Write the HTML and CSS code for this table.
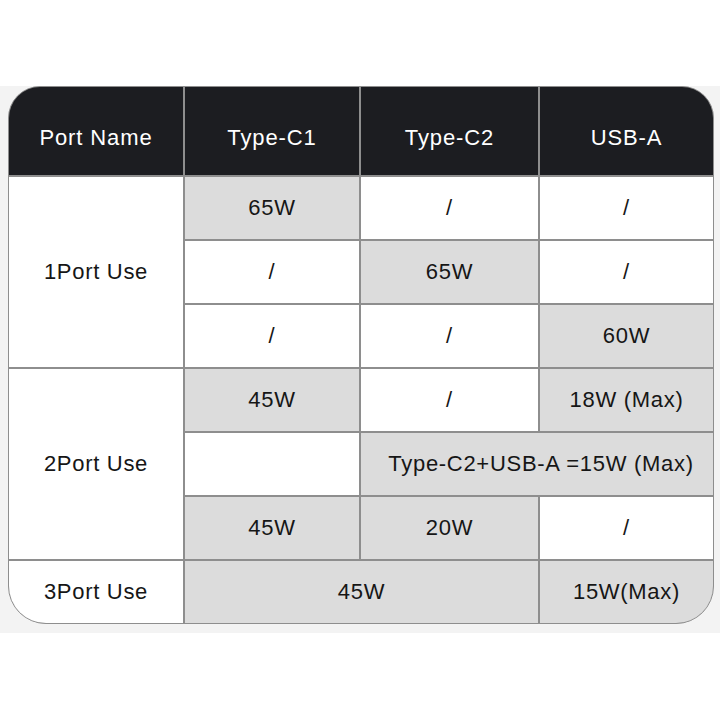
FILE: index.html
```html
<!DOCTYPE html>
<html>
<head>
<meta charset="utf-8">
<link rel="stylesheet" href="styles.css">
</head>
<body>
<div class="band">
  <div class="table">
    <div class="cell head">Port Name</div>
    <div class="cell head">Type-C1</div>
    <div class="cell head">Type-C2</div>
    <div class="cell head">USB-A</div>

    <div class="cell label span3">1Port Use</div>
    <div class="cell gray">65W</div>
    <div class="cell">/</div>
    <div class="cell">/</div>
    <div class="cell">/</div>
    <div class="cell gray">65W</div>
    <div class="cell">/</div>
    <div class="cell">/</div>
    <div class="cell">/</div>
    <div class="cell gray">60W</div>

    <div class="cell label span3">2Port Use</div>
    <div class="cell gray">45W</div>
    <div class="cell">/</div>
    <div class="cell gray">18W (Max)</div>
    <div class="cell"></div>
    <div class="cell gray span2 shared">Type-C2+USB-A =15W (Max)</div>
    <div class="cell gray">45W</div>
    <div class="cell gray">20W</div>
    <div class="cell">/</div>

    <div class="cell label">3Port Use</div>
    <div class="cell gray span2">45W</div>
    <div class="cell gray">15W(Max)</div>
  </div>
</div>
</body>
</html>
```

FILE: styles.css
```css
html, body {
  margin: 0;
  padding: 0;
  background: #ffffff;
}

body {
  font-family: "Liberation Sans", Arial, sans-serif;
}

.band {
  margin-top: 86px;
  background: #f3f3f3;
  padding: 0 6px 9px 8px;
}

.table {
  display: grid;
  grid-template-columns: 174px 174px 177px 173px;
  grid-template-rows: 88px repeat(7, 62px);
  gap: 2px;
  background: #8e8e8e;
  border: 1px solid #8e8e8e;
  border-radius: 32px 32px 38px 38px;
  overflow: hidden;
}

.cell {
  display: flex;
  align-items: center;
  justify-content: center;
  background: #ffffff;
  color: #161616;
  font-size: 22px;
  letter-spacing: 0.7px;
}

.head {
  background: #1c1d21;
  color: #ffffff;
  letter-spacing: 0.9px;
  padding-top: 14px;
}

.gray {
  background: #dcdcdc;
}

.span3 {
  grid-row: span 3;
}

.span2 {
  grid-column: span 2;
}

.shared {
  padding-left: 8px;
}
```
